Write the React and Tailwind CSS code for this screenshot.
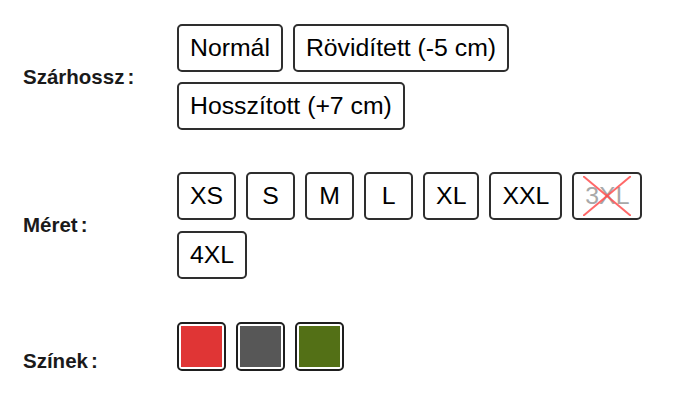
const lengths = ['Normál', 'Rövidített (-5 cm)', 'Hosszított (+7 cm)'];

const sizes = [
  { name: 'XS' },
  { name: 'S' },
  { name: 'M' },
  { name: 'L' },
  { name: 'XL' },
  { name: 'XXL' },
  { name: '3XL', soldOut: true },
  { name: '4XL' },
];

const colors = [
  { name: 'Piros', hex: '#e03535' },
  { name: 'Szürke', hex: '#575757' },
  { name: 'Zöld', hex: '#537016' },
];

function Label({ children }) {
  return (
    <div className="w-[154px] shrink-0 text-[20.5px] font-bold text-[#1a1a1a]">
      {children}
      <span className="ml-[3px]">:</span>
    </div>
  );
}

function Option({ children, disabled }) {
  return (
    <button
      type="button"
      className={`relative h-12 min-w-[49px] px-[11px] flex items-center justify-center border-2 border-[#2e2e2e] rounded-[5px] bg-white text-[24.8px] leading-none ${
        disabled ? 'text-[#a8a8a8]' : 'text-black'
      }`}
    >
      {children}
      {disabled && (
        <svg className="absolute left-1/2 top-1/2 -translate-x-1/2 -translate-y-1/2" width="48" height="40" viewBox="0 0 48 40">
          <line x1="0" y1="0" x2="48" y2="40" stroke="#ff4d4d" strokeWidth="2" strokeOpacity="0.85" />
          <line x1="48" y1="0" x2="0" y2="40" stroke="#ff4d4d" strokeWidth="2" strokeOpacity="0.85" />
        </svg>
      )}
    </button>
  );
}

export default function App() {
  return (
    <div
      className="min-h-screen bg-white pl-[23px] pt-[24px] flex flex-col gap-[42px]"
      style={{ fontFamily: '"Liberation Sans", Arial, sans-serif' }}
    >
      {/* Szárhossz */}
      <div className="flex items-center">
        <Label>Szárhossz</Label>
        <div className="flex flex-wrap gap-x-[10px] gap-y-[10px] w-[340px]">
          {lengths.map((l) => (
            <Option key={l}>{l}</Option>
          ))}
        </div>
      </div>

      {/* Méret */}
      <div className="flex items-center">
        <Label>Méret</Label>
        <div className="flex flex-wrap gap-x-[10px] gap-y-[11px] w-[470px]">
          {sizes.map((s) => (
            <Option key={s.name} disabled={s.soldOut}>
              {s.name}
            </Option>
          ))}
        </div>
      </div>

      {/* Színek */}
      <div className="flex items-center">
        <Label>Színek</Label>
        <div className="flex gap-[10px] pt-[1px] pb-[31px]">
          {colors.map((c) => (
            <button
              key={c.name}
              type="button"
              title={c.name}
              className="w-[49px] h-[49px] p-[2px] border-2 border-[#1e1e1e] rounded-[5px] bg-white"
            >
              <span className="block w-full h-full" style={{ backgroundColor: c.hex }} />
            </button>
          ))}
        </div>
      </div>
    </div>
  );
}
